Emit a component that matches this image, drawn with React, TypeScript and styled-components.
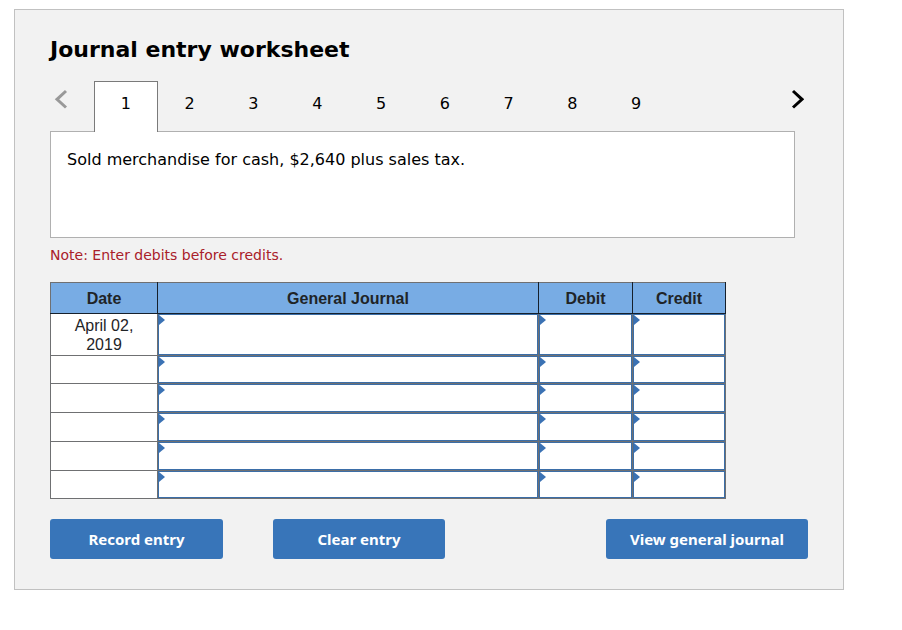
import React, { useState } from "react";
import styled, { createGlobalStyle } from "styled-components";

const GlobalStyle = createGlobalStyle`
  *, *::before, *::after { box-sizing: border-box; }
  body {
    margin: 0;
    background: #ffffff;
    color: #000000;
    font-family: "DejaVu Sans", Verdana, sans-serif;
    font-size: 16px;
  }
`;

const Page = styled.div`
  padding: 9px 58px 40px 14px;
`;

const Panel = styled.main`
  padding: 24px 35px 30px;
  background: #f2f2f2;
  border: 1px solid #c1c1c1;
`;

const Title = styled.h1`
  margin: 0 0 16px;
  font-size: 22px;
  line-height: 31px;
  font-weight: 700;
`;

const Pager = styled.nav`
  display: flex;
  align-items: flex-start;
  justify-content: space-between;
`;

const ArrowButton = styled.button<{ $side: "left" | "right" }>`
  flex: none;
  display: flex;
  justify-content: ${(p) => (p.$side === "left" ? "flex-start" : "flex-end")};
  width: 44px;
  padding: 8px 4px;
  border: 0;
  background: none;
  color: #000000;
  cursor: pointer;

  &:disabled {
    color: #999999;
    cursor: default;
  }
`;

const TabList = styled.div`
  flex: 1;
  display: grid;
  grid-template-columns: repeat(9, 1fr);
  max-width: 574px;
  margin-right: auto;
`;

const Tab = styled.button<{ $active: boolean }>`
  height: 51px;
  margin-bottom: -1px;
  padding: 0 0 8px;
  border: 1px solid ${(p) => (p.$active ? "#7a7a7a" : "transparent")};
  border-bottom: 0;
  background: ${(p) => (p.$active ? "#ffffff" : "transparent")};
  position: relative;
  color: #000000;
  font: inherit;
  cursor: pointer;
`;

const Transaction = styled.section`
  min-height: 107px;
  margin-right: 13px;
  padding: 18px 16px;
  border: 1px solid #b0b0b0;
  background: #ffffff;
  line-height: 20px;
`;

const Note = styled.p`
  margin: 7px 0 17px;
  color: #a9202a;
  font-size: 14px;
  line-height: 20px;
`;

const Journal = styled.table`
  width: calc(100% - 82px);
  border-collapse: collapse;
  table-layout: fixed;
  background: #ffffff;
  color: #1f2427;
  font-family: "Liberation Sans", Arial, sans-serif;
  font-size: 16px;
  line-height: 19px;
`;

const Column = styled.col<{ $width?: number }>`
  width: ${(p) => (p.$width ? `${p.$width}px` : "auto")};
`;

const HeadCell = styled.th`
  height: 31px;
  padding: 0;
  border: 1px solid #16202b;
  border-top-color: #6f7072;
  background: #78ace4;
  font-weight: 700;

  &:first-child {
    border-left-color: #6f7072;
  }
`;

const EntryRow = styled.tr`
  height: 29px;

  &:first-child {
    height: 42px;
  }

  &:nth-child(2),
  &:last-child {
    height: 28px;
  }
`;

const DateCell = styled.td`
  padding: 0 16px;
  border: 1px solid #6f7072;
  text-align: center;
`;

const EntryCell = styled.td`
  position: relative;
  padding: 0;
  border: 1px solid #6f7072;
`;

const EntryInput = styled.input`
  position: absolute;
  inset: 0;
  width: 100%;
  height: 100%;
  padding: 0 10px;
  border: 1px solid #3b6ea8;
  background: transparent;
  font: inherit;
  outline-offset: -2px;
`;

const Marker = styled.svg`
  position: absolute;
  top: 1px;
  left: 1px;
  pointer-events: none;
`;

const Actions = styled.div`
  display: flex;
  gap: 50px;
  margin-top: 20px;
`;

const ActionButton = styled.button<{ $width: number; $last?: boolean }>`
  width: ${(p) => p.$width}px;
  height: 40px;
  margin-left: ${(p) => (p.$last ? "auto" : "0")};
  padding: 0;
  border: 0;
  border-radius: 3px;
  background: #3875b9;
  color: #ffffff;
  font-family: "Noto Sans", Tahoma, sans-serif;
  font-size: 15px;
  font-weight: 700;
  white-space: nowrap;
  cursor: pointer;
`;

const pages = [1, 2, 3, 4, 5, 6, 7, 8, 9];
const dates = ["April 02, 2019", "", "", "", "", ""];
const fields = ["General Journal", "Debit", "Credit"];

export default function App() {
  const [page, setPage] = useState(1);

  return (
    <>
      <GlobalStyle />
      <Page>
        <Panel>
          <Title>Journal entry worksheet</Title>
          <Pager aria-label="Transactions">
            <ArrowButton
              $side="left"
              aria-label="Previous"
              disabled={page === 1}
              onClick={() => setPage(page - 1)}
            >
              <svg width="14" height="20" viewBox="0 0 14 20" fill="none" stroke="currentColor" strokeWidth="3">
                <path d="M12 2L3 10.300L12 18.500" />
              </svg>
            </ArrowButton>
            <TabList role="tablist">
              {pages.map((n) => (
                <Tab
                  key={n}
                  role="tab"
                  aria-selected={n === page}
                  $active={n === page}
                  onClick={() => setPage(n)}
                >
                  {n}
                </Tab>
              ))}
            </TabList>
            <ArrowButton
              $side="right"
              aria-label="Next"
              disabled={page === 9}
              onClick={() => setPage(page + 1)}
            >
              <svg width="14" height="20" viewBox="0 0 14 20" fill="none" stroke="currentColor" strokeWidth="3">
                <path d="M3 2L12 10.300L3 18.500" />
              </svg>
            </ArrowButton>
          </Pager>
          <Transaction>Sold merchandise for cash, $2,640 plus sales tax.</Transaction>
          <Note>Note: Enter debits before credits.</Note>
          <Journal>
            <colgroup>
              <Column $width={107} />
              <Column />
              <Column $width={94} />
              <Column $width={93} />
            </colgroup>
            <thead>
              <tr>
                <HeadCell scope="col">Date</HeadCell>
                {fields.map((f) => (
                  <HeadCell key={f} scope="col">{f}</HeadCell>
                ))}
              </tr>
            </thead>
            <tbody>
              {dates.map((date, i) => (
                <EntryRow key={i}>
                  <DateCell>{date}</DateCell>
                  {fields.map((f) => (
                    <EntryCell key={f}>
                      <EntryInput aria-label={`${f}, line ${i + 1}`} />
                      <Marker width="6" height="10" viewBox="0 0 6 10" aria-hidden="true">
                        <path d="M0 0L6 5L0 10Z" fill="#3b72b4" />
                      </Marker>
                    </EntryCell>
                  ))}
                </EntryRow>
              ))}
            </tbody>
          </Journal>
          <Actions>
            <ActionButton $width={173}>Record entry</ActionButton>
            <ActionButton $width={172}>Clear entry</ActionButton>
            <ActionButton $width={202} $last>View general journal</ActionButton>
          </Actions>
        </Panel>
      </Page>
    </>
  );
}
